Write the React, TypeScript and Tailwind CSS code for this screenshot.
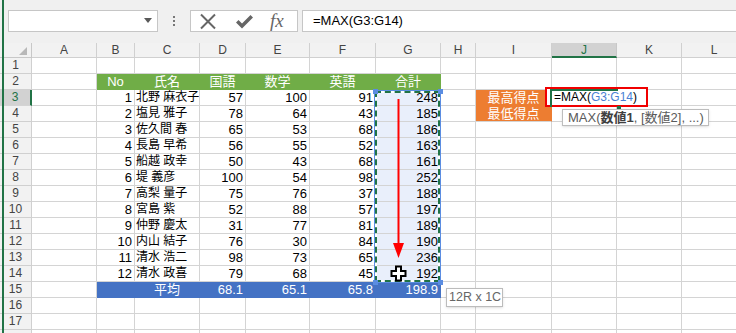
import { Fragment, type ReactNode } from "react";

const data: [number, string, number, number, number, number][] = [
  [1, "北野 麻衣子", 57, 100, 91, 248],
  [2, "塩見 雅子", 78, 64, 43, 185],
  [3, "佐久間 春", 65, 53, 68, 186],
  [4, "長島 早希", 56, 55, 52, 163],
  [5, "船越 政幸", 50, 43, 68, 161],
  [6, "堤 義彦", 100, 54, 98, 252],
  [7, "高梨 量子", 75, 76, 37, 188],
  [8, "宮島 紫", 52, 88, 57, 197],
  [9, "仲野 慶太", 31, 77, 81, 189],
  [10, "内山 結子", 76, 30, 84, 190],
  [11, "清水 浩二", 98, 73, 65, 236],
  [12, "清水 政喜", 79, 68, 45, 192],
];

const cols = ["A", "B", "C", "D", "E", "F", "G", "H", "I", "J", "K", "L"];
const rows = Array.from({ length: 18 }, (_, i) => i + 1);

type Kind = "plain" | "green" | "blue" | "sel" | "orange" | "orangeTop";

const kindClass: Record<Kind, string> = {
  plain: "bg-white border-[#d4d4d4] text-black",
  green: "bg-[#70ad47] border-[#70ad47] text-white",
  blue: "bg-[#4472c4] border-[#4472c4] text-white",
  sel: "bg-[#e9effb] border-[#d4d4d4] text-black",
  orangeTop: "bg-[#ed7d31] border-[#ed7d31] text-white",
  orange: "bg-[#ed7d31] border-r-[#ed7d31] border-b-[#d4d4d4] text-white",
};

const R = "px-[2px] text-right text-[13px]";
const C = "px-[2px] text-center text-[13px]";

function cellInfo(r: number, c: number): { text?: ReactNode; kind: Kind; align: string } {
  if (r === 2 && c >= 1 && c <= 6) {
    return { text: ["No", "氏名", "国語", "数学", "英語", "合計"][c - 1], kind: "green", align: C };
  }
  if (r >= 3 && r <= 14) {
    const d = data[r - 3];
    if (c === 1) return { text: d[0], kind: "plain", align: R };
    if (c === 2) return { text: d[1], kind: "plain", align: "pl-[1px] text-left text-[12px]" };
    if (c >= 3 && c <= 5) return { text: d[c - 1], kind: "plain", align: R };
    if (c === 6) return { text: d[5], kind: "sel", align: R };
  }
  if (r === 15 && c >= 1 && c <= 6) {
    const avg = ["", "平均", "68.1", "65.1", "65.8", "198.9"][c - 1];
    return { text: avg, kind: "blue", align: c === 2 ? C : R };
  }
  if (c === 8 && r === 3) return { text: "最高得点", kind: "orangeTop", align: C };
  if (c === 8 && r === 4) return { text: "最低得点", kind: "orange", align: C };
  return { kind: "plain", align: "text-[13px]" };
}

export default function App() {
  return (
    <div className="relative h-[333px] w-[736px] overflow-hidden bg-[#f0f0f0] font-['Liberation_Sans','Noto_Sans_CJK_JP',sans-serif]">
      {/* formula bar */}
      <div className="flex h-[43px] items-start pl-[8px] pt-[10px]">
        <div className="relative h-[22px] w-[150px] border border-[#c6c6c6] bg-white">
          <svg className="absolute right-[5px] top-[7px]" width="8" height="5">
            <path d="M0 0h8L4 5z" fill="#595959" />
          </svg>
        </div>
        <div className="flex w-[32px] flex-col items-center gap-[2px] pt-[6px]">
          <div className="h-[2px] w-[2px] bg-[#777]" />
          <div className="h-[2px] w-[2px] bg-[#777]" />
          <div className="h-[2px] w-[2px] bg-[#777]" />
        </div>
        <div className="flex h-[22px] w-[108px] items-center border border-[#c6c6c6] bg-white pl-[8px]">
          <svg width="18" height="17" viewBox="0 0 18 17">
            <path d="M2 1.5 16 15.5M16 1.5 2 15.5" stroke="#666" strokeWidth="2" />
          </svg>
          <svg className="ml-[18px]" width="19" height="15" viewBox="0 0 19 15">
            <path d="M1 8.5 3.5 6 7 9.5 15.5 1 18 3.5 7 14.5z" fill="#666" />
          </svg>
          <span className="ml-[16px] font-['Liberation_Serif',serif] text-[19px] italic leading-[20px] text-[#666]">fx</span>
        </div>
        <div className="ml-[4px] h-[22px] flex-1 border-y border-l border-[#c6c6c6] bg-white pl-[10px] text-[13px] leading-[20px] text-black">
          =MAX(G3:G14)
        </div>
      </div>

      {/* sheet */}
      <div className="grid grid-cols-[32px_65px_38px_65px_46px_64px_66px_65px_35px_76px_65px_65px_65px]">
        <div className="relative h-[15px] border-b border-r border-[#c8c8c8] bg-[#f2f2f2]">
          <svg className="absolute bottom-[2px] right-[4px]" width="8" height="8">
            <path d="M8 0V8H0z" fill="#b8b8b8" />
          </svg>
        </div>
        {cols.map((c) => (
          <div
            key={c}
            className={
              c === "J"
                ? "h-[15px] border-b-2 border-r border-b-[#217346] border-r-[#c8c8c8] bg-[#d2d2d2] text-center text-[12px] leading-[14px] text-[#217346]"
                : "h-[15px] border-b border-r border-[#d0d0d0] bg-[#f2f2f2] text-center text-[12px] leading-[14px] text-[#444]"
            }
          >
            {c}
          </div>
        ))}
        {rows.map((r) => (
          <Fragment key={r}>
            <div
              className={
                r === 3
                  ? "h-4 border-b border-r-2 border-b-[#d4d4d4] border-r-[#217346] bg-[#d2d2d2] text-center text-[12px] leading-[15px] text-[#217346]"
                  : "h-4 border-b border-r border-[#d0d0d0] bg-[#f2f2f2] text-center text-[12px] leading-[15px] text-[#444]"
              }
            >
              {r < 18 ? r : null}
            </div>
            {cols.map((_, c) => {
              const info = cellInfo(r, c);
              return (
                <div
                  key={c}
                  className={`h-4 overflow-hidden whitespace-nowrap border-b border-r leading-[15px] ${kindClass[info.kind]} ${info.align}`}
                >
                  {info.text}
                </div>
              );
            })}
          </Fragment>
        ))}
      </div>

      {/* window frame edge */}
      <div className="absolute left-[2px] top-0 h-full w-[2px] bg-[#217346]" />

      {/* copy range on G3:G14 */}
      <div className="absolute left-[374px] top-[90px] h-[193px] w-[67px] border border-[#5b8de2]" />
      <div className="absolute left-[375px] top-[91px] h-[191px] w-[65px] border-2 border-white" />
      <div className="absolute left-[375px] top-[91px] h-[191px] w-[65px] border-2 border-dashed border-[#217346]" />
      <div className="absolute left-[373px] top-[89px] h-[5px] w-[5px] bg-[#5b8de2]" />
      <div className="absolute left-[438px] top-[89px] h-[5px] w-[5px] bg-[#5b8de2]" />
      <div className="absolute left-[373px] top-[280px] h-[5px] w-[5px] bg-[#5b8de2]" />
      <div className="absolute left-[438px] top-[280px] h-[5px] w-[5px] bg-[#5b8de2]" />

      {/* red arrow */}
      <svg className="absolute left-[392px] top-[96px]" width="14" height="164" viewBox="0 0 14 164">
        <path d="M6.5 3V150" stroke="#ff0000" strokeWidth="2" />
        <path d="M1 147H12L6.5 162z" fill="#ff0000" />
      </svg>

      {/* cursor */}
      <svg className="absolute left-[390px] top-[265px]" width="17" height="17" viewBox="0 0 17 17">
        <path d="M6 1.5h5v4.5h4.5v5H11v4.5H6V11H1.5V6H6z" fill="#fff" stroke="#000" strokeWidth="2" />
      </svg>

      {/* editing J3 */}
      <div className="absolute left-[545px] top-[87px] h-[20px] w-[103px] border-2 border-[#f00000] bg-white">
        <div className="absolute left-[3px] top-0 h-[2px] w-[68px] bg-[#217346]" />
        <div className="absolute left-[3px] top-0 h-[18px] w-[2px] bg-[#217346]" />
        <div className="absolute left-[7px] top-0 whitespace-nowrap text-[12px] leading-[17px] text-black">
          =MAX(<span className="text-[#4a7fd4]">G3:G14</span>)
        </div>
      </div>
      <div className="absolute left-[617px] top-[106px] h-[4px] w-[4px] bg-[#217346]" />

      {/* function tooltip */}
      <div className="absolute left-[562px] top-[109px] h-[17px] w-[147px] whitespace-nowrap border border-[#bdbdbd] bg-white pl-[5px] text-[13px] leading-[15px] text-[#5a5a5a] shadow-sm">
        MAX(<span className="font-bold text-[#404040]">数値1</span>, [数値2], ...)
      </div>

      {/* size tooltip */}
      <div className="absolute left-[446px] top-[288px] h-[19px] w-[57px] whitespace-nowrap border border-[#bcbcbc] bg-white pl-[2px] text-[12.5px] leading-[17px] text-[#666] shadow-sm">
        12R x 1C
      </div>
    </div>
  );
}
